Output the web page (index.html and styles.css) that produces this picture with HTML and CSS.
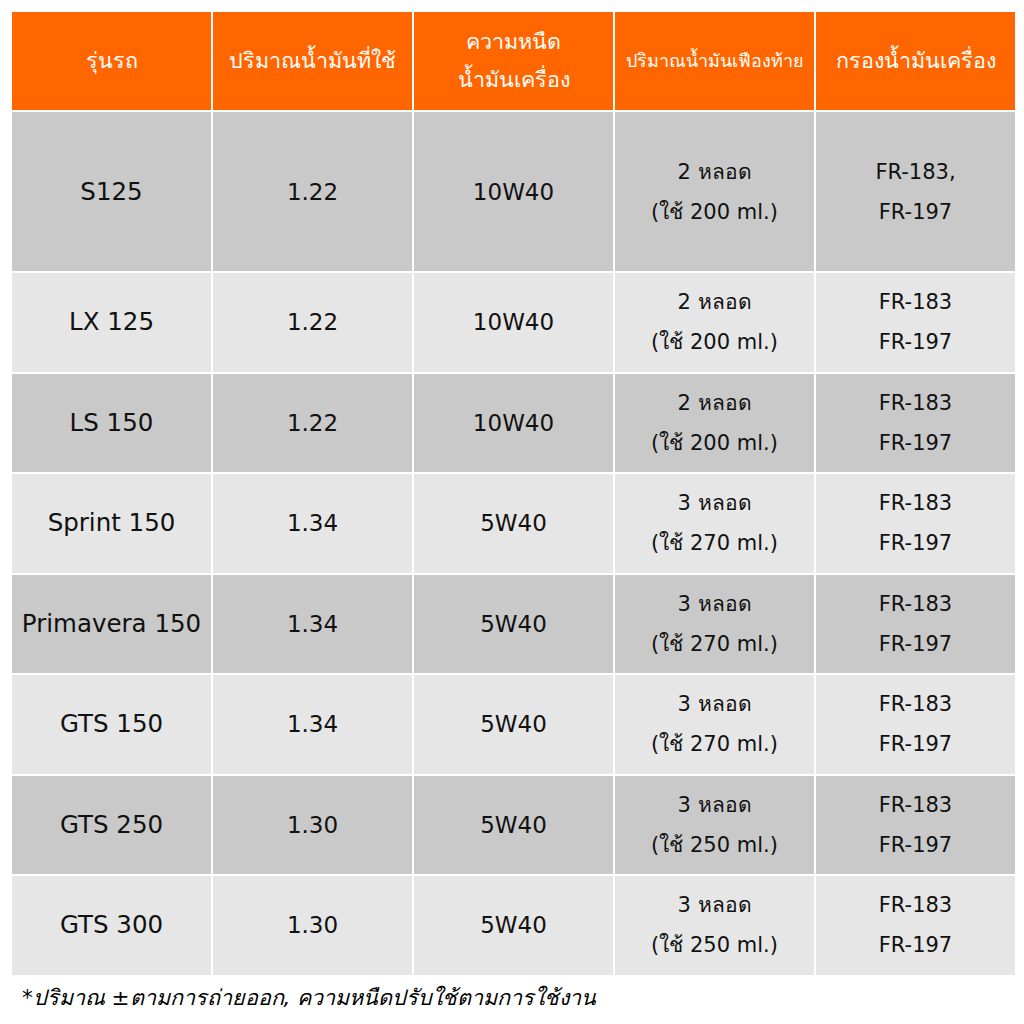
FILE: index.html
```html
<!DOCTYPE html>
<html lang="th">
<head>
<meta charset="utf-8">
<title>ตารางน้ำมันเครื่อง</title>
<link rel="stylesheet" href="styles.css">
</head>
<body>
<div class="page">
  <div class="grid">
    <div class="cell head">รุ่นรถ</div>
    <div class="cell head">ปริมาณน้ำมันที่ใช้</div>
    <div class="cell head">ความหนืด<br>น้ำมันเครื่อง</div>
    <div class="cell head small">ปริมาณน้ำมันเฟืองท้าย</div>
    <div class="cell head">กรองน้ำมันเครื่อง</div>

    <div class="cell dark model">S125</div>
    <div class="cell dark">1.22</div>
    <div class="cell dark">10W40</div>
    <div class="cell dark two"><span>2 หลอด</span><span>(ใช้ 200 ml.)</span></div>
    <div class="cell dark two"><span>FR-183,</span><span>FR-197</span></div>

    <div class="cell light model">LX 125</div>
    <div class="cell light">1.22</div>
    <div class="cell light">10W40</div>
    <div class="cell light two"><span>2 หลอด</span><span>(ใช้ 200 ml.)</span></div>
    <div class="cell light two"><span>FR-183</span><span>FR-197</span></div>

    <div class="cell dark model">LS 150</div>
    <div class="cell dark">1.22</div>
    <div class="cell dark">10W40</div>
    <div class="cell dark two"><span>2 หลอด</span><span>(ใช้ 200 ml.)</span></div>
    <div class="cell dark two"><span>FR-183</span><span>FR-197</span></div>

    <div class="cell light model">Sprint 150</div>
    <div class="cell light">1.34</div>
    <div class="cell light">5W40</div>
    <div class="cell light two"><span>3 หลอด</span><span>(ใช้ 270 ml.)</span></div>
    <div class="cell light two"><span>FR-183</span><span>FR-197</span></div>

    <div class="cell dark model">Primavera 150</div>
    <div class="cell dark">1.34</div>
    <div class="cell dark">5W40</div>
    <div class="cell dark two"><span>3 หลอด</span><span>(ใช้ 270 ml.)</span></div>
    <div class="cell dark two"><span>FR-183</span><span>FR-197</span></div>

    <div class="cell light model">GTS 150</div>
    <div class="cell light">1.34</div>
    <div class="cell light">5W40</div>
    <div class="cell light two"><span>3 หลอด</span><span>(ใช้ 270 ml.)</span></div>
    <div class="cell light two"><span>FR-183</span><span>FR-197</span></div>

    <div class="cell dark model">GTS 250</div>
    <div class="cell dark">1.30</div>
    <div class="cell dark">5W40</div>
    <div class="cell dark two"><span>3 หลอด</span><span>(ใช้ 250 ml.)</span></div>
    <div class="cell dark two"><span>FR-183</span><span>FR-197</span></div>

    <div class="cell light model">GTS 300</div>
    <div class="cell light">1.30</div>
    <div class="cell light">5W40</div>
    <div class="cell light two"><span>3 หลอด</span><span>(ใช้ 250 ml.)</span></div>
    <div class="cell light two"><span>FR-183</span><span>FR-197</span></div>
  </div>
  <p class="note">*ปริมาณ ±ตามการถ่ายออก, ความหนืดปรับใช้ตามการใช้งาน</p>
</div>
</body>
</html>
```
FILE: styles.css
```css
html, body {
  margin: 0;
  padding: 0;
  background: #ffffff;
}
body {
  font-family: "DejaVu Sans", "Noto Sans", sans-serif;
  color: #111111;
}
.page {
  padding: 12px 9px 0 12px;
}
.grid {
  width: 1003px;
  display: grid;
  grid-template-columns: repeat(5, 199px);
  grid-template-rows: 98px 159px repeat(7, 98.5px);
  gap: 2px;
}
.cell {
  display: flex;
  flex-direction: column;
  align-items: center;
  justify-content: center;
  text-align: center;
  font-size: 23px;
  line-height: 40px;
}
.head {
  background: #ff6600;
  color: #ffffff;
  font-size: 21.5px;
  line-height: 38px;
}
.head.small {
  font-size: 18px;
}
.dark {
  background: #c9c9c9;
}
.light {
  background: #e6e6e6;
}
.model {
  font-size: 24.5px;
}
.two {
  font-size: 21px;
}
.note {
  margin: 5px 0 0 10px;
  font-size: 21.5px;
  font-style: italic;
  color: #000000;
}
```
